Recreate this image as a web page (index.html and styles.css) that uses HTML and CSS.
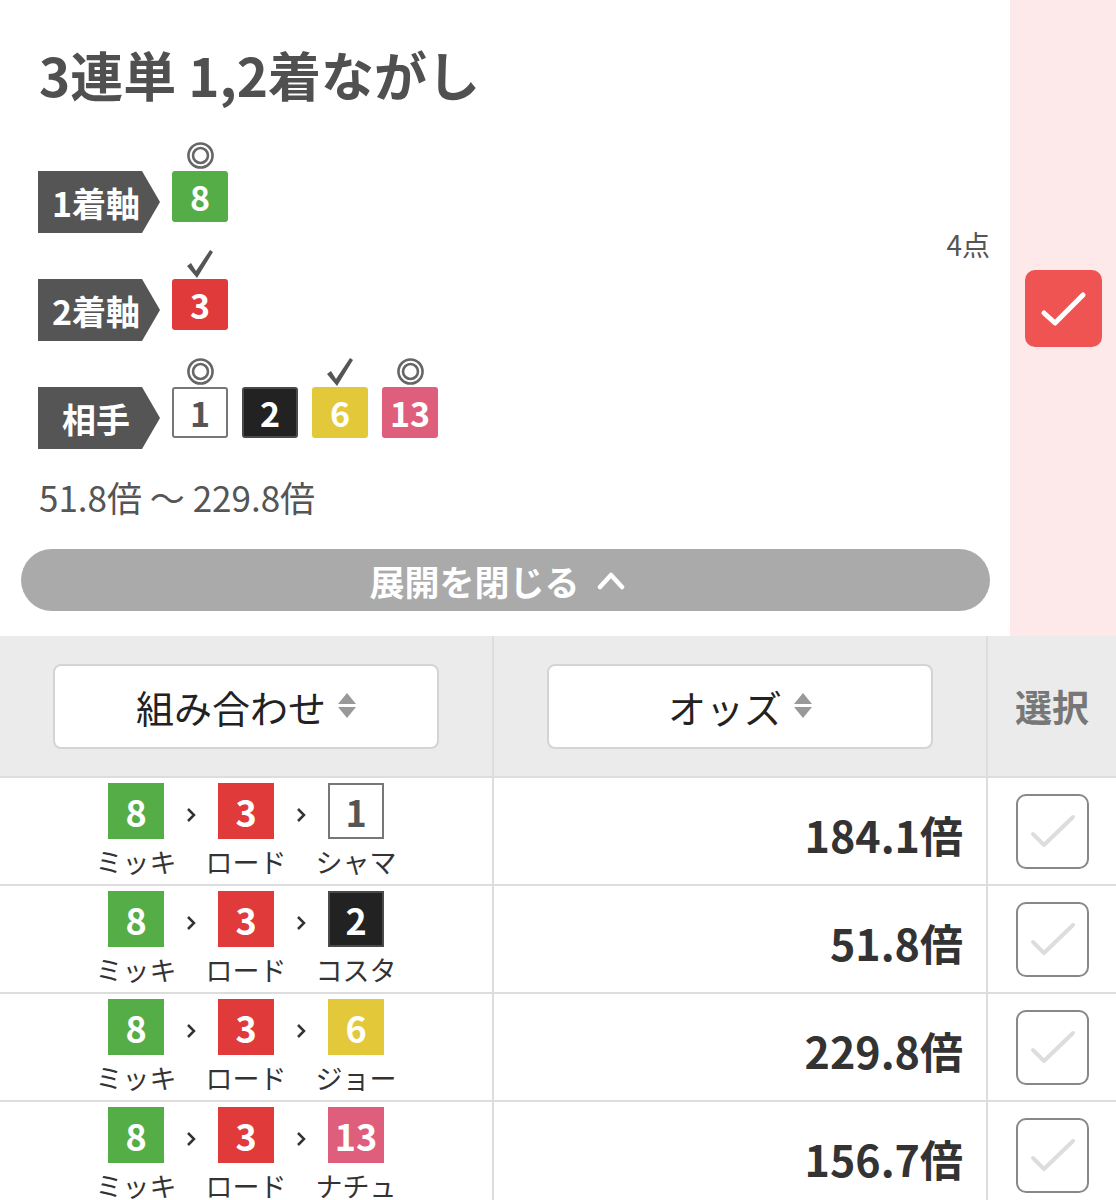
FILE: index.html
```html
<!DOCTYPE html>
<html lang="ja">
<head>
<meta charset="utf-8">
<title>3連単 1,2着ながし</title>
<link rel="stylesheet" href="styles.css">
</head>
<body>
<div class="top">
  <div class="main">
    <h1 class="title">3連単 1,2着ながし</h1>
    <div class="picks">
      <div class="pick-rows">
        <div class="pick-row">
          <div class="pick-label">1着軸</div>
          <div class="horses">
            <div class="horse">
              <span class="mark"><svg class="dbl" width="27" height="27" viewBox="0 0 26 26"><circle cx="13" cy="13" r="11.6" fill="none" stroke="#666" stroke-width="2.5"/><circle cx="13" cy="13" r="7.2" fill="none" stroke="#666" stroke-width="2.5"/></svg></span>
              <span class="num c-green">8</span>
            </div>
          </div>
        </div>
        <div class="pick-row">
          <div class="pick-label">2着軸</div>
          <div class="horses">
            <div class="horse">
              <span class="mark"><svg width="28" height="30" viewBox="0 0 28 30"><polygon points="1,17 5,14 10,22 24,1 27,3 11,29" fill="#555"/></svg></span>
              <span class="num c-red">3</span>
            </div>
          </div>
        </div>
        <div class="pick-row">
          <div class="pick-label">相手</div>
          <div class="horses">
            <div class="horse">
              <span class="mark"><svg class="dbl" width="27" height="27" viewBox="0 0 26 26"><circle cx="13" cy="13" r="11.6" fill="none" stroke="#666" stroke-width="2.5"/><circle cx="13" cy="13" r="7.2" fill="none" stroke="#666" stroke-width="2.5"/></svg></span>
              <span class="num c-white">1</span>
            </div>
            <div class="horse">
              <span class="mark"></span>
              <span class="num c-black">2</span>
            </div>
            <div class="horse">
              <span class="mark"><svg width="28" height="30" viewBox="0 0 28 30"><polygon points="1,17 5,14 10,22 24,1 27,3 11,29" fill="#555"/></svg></span>
              <span class="num c-yellow">6</span>
            </div>
            <div class="horse">
              <span class="mark"><svg class="dbl" width="27" height="27" viewBox="0 0 26 26"><circle cx="13" cy="13" r="11.6" fill="none" stroke="#666" stroke-width="2.5"/><circle cx="13" cy="13" r="7.2" fill="none" stroke="#666" stroke-width="2.5"/></svg></span>
              <span class="num c-pink">13</span>
            </div>
          </div>
        </div>
      </div>
      <div class="count">4点</div>
    </div>
    <p class="range">51.8倍 〜 229.8倍</p>
    <button class="collapse">展開を閉じる<svg width="30" height="20" viewBox="0 0 30 20"><path d="M4 17 L15 5 L26 17" fill="none" stroke="#fff" stroke-width="4.5" stroke-linecap="round" stroke-linejoin="round"/></svg></button>
  </div>
  <div class="side">
    <button class="check-on"><svg width="77" height="77" viewBox="0 0 77 77"><path d="M19 43 L30 53 L58 25" fill="none" stroke="#fff" stroke-width="5" stroke-linecap="round" stroke-linejoin="round"/></svg></button>
  </div>
</div>

<div class="grid">
  <div class="cell head"><button class="sort">組み合わせ<svg width="18" height="26" viewBox="0 0 18 26"><path d="M9 0 L18 11 L0 11 Z M0 14 L18 14 L9 25 Z" fill="#999"/></svg></button></div>
  <div class="cell head col-b"><button class="sort">オッズ<svg width="18" height="26" viewBox="0 0 18 26"><path d="M9 0 L18 11 L0 11 Z M0 14 L18 14 L9 25 Z" fill="#999"/></svg></button></div>
  <div class="cell head col-b sel-head">選択</div>

  <div class="cell combo">
    <div class="runner"><span class="sq c-green">8</span><span class="name">ミッキ</span></div>
    <span class="arrow"><svg width="10" height="16" viewBox="0 0 10 16"><path d="M2 2 L8 8 L2 14" fill="none" stroke="#333" stroke-width="2.5"/></svg></span>
    <div class="runner"><span class="sq c-red">3</span><span class="name">ロード</span></div>
    <span class="arrow"><svg width="10" height="16" viewBox="0 0 10 16"><path d="M2 2 L8 8 L2 14" fill="none" stroke="#333" stroke-width="2.5"/></svg></span>
    <div class="runner"><span class="sq c-white">1</span><span class="name">シャマ</span></div>
  </div>
  <div class="cell odds col-b">184.1倍</div>
  <div class="cell sel col-b"><span class="cb"><svg width="69" height="71" viewBox="0 0 69 71"><path d="M15 38 L26 49 L55 21" fill="none" stroke="#ddd" stroke-width="4" stroke-linecap="round" stroke-linejoin="round"/></svg></span></div>

  <div class="cell combo">
    <div class="runner"><span class="sq c-green">8</span><span class="name">ミッキ</span></div>
    <span class="arrow"><svg width="10" height="16" viewBox="0 0 10 16"><path d="M2 2 L8 8 L2 14" fill="none" stroke="#333" stroke-width="2.5"/></svg></span>
    <div class="runner"><span class="sq c-red">3</span><span class="name">ロード</span></div>
    <span class="arrow"><svg width="10" height="16" viewBox="0 0 10 16"><path d="M2 2 L8 8 L2 14" fill="none" stroke="#333" stroke-width="2.5"/></svg></span>
    <div class="runner"><span class="sq c-black">2</span><span class="name">コスタ</span></div>
  </div>
  <div class="cell odds col-b">51.8倍</div>
  <div class="cell sel col-b"><span class="cb"><svg width="69" height="71" viewBox="0 0 69 71"><path d="M15 38 L26 49 L55 21" fill="none" stroke="#ddd" stroke-width="4" stroke-linecap="round" stroke-linejoin="round"/></svg></span></div>

  <div class="cell combo">
    <div class="runner"><span class="sq c-green">8</span><span class="name">ミッキ</span></div>
    <span class="arrow"><svg width="10" height="16" viewBox="0 0 10 16"><path d="M2 2 L8 8 L2 14" fill="none" stroke="#333" stroke-width="2.5"/></svg></span>
    <div class="runner"><span class="sq c-red">3</span><span class="name">ロード</span></div>
    <span class="arrow"><svg width="10" height="16" viewBox="0 0 10 16"><path d="M2 2 L8 8 L2 14" fill="none" stroke="#333" stroke-width="2.5"/></svg></span>
    <div class="runner"><span class="sq c-yellow">6</span><span class="name">ジョー</span></div>
  </div>
  <div class="cell odds col-b">229.8倍</div>
  <div class="cell sel col-b"><span class="cb"><svg width="69" height="71" viewBox="0 0 69 71"><path d="M15 38 L26 49 L55 21" fill="none" stroke="#ddd" stroke-width="4" stroke-linecap="round" stroke-linejoin="round"/></svg></span></div>

  <div class="cell combo">
    <div class="runner"><span class="sq c-green">8</span><span class="name">ミッキ</span></div>
    <span class="arrow"><svg width="10" height="16" viewBox="0 0 10 16"><path d="M2 2 L8 8 L2 14" fill="none" stroke="#333" stroke-width="2.5"/></svg></span>
    <div class="runner"><span class="sq c-red">3</span><span class="name">ロード</span></div>
    <span class="arrow"><svg width="10" height="16" viewBox="0 0 10 16"><path d="M2 2 L8 8 L2 14" fill="none" stroke="#333" stroke-width="2.5"/></svg></span>
    <div class="runner"><span class="sq c-pink">13</span><span class="name">ナチュ</span></div>
  </div>
  <div class="cell odds col-b">156.7倍</div>
  <div class="cell sel col-b"><span class="cb"><svg width="69" height="71" viewBox="0 0 69 71"><path d="M15 38 L26 49 L55 21" fill="none" stroke="#ddd" stroke-width="4" stroke-linecap="round" stroke-linejoin="round"/></svg></span></div>
</div>
</body>
</html>
```

FILE: styles.css
```css
* { box-sizing: border-box; }
body {
  margin: 0;
  width: 1116px;
  font-family: "Noto Sans CJK JP", "Noto Sans", sans-serif;
  color: #555;
  background: #fff;
}
svg { display: block; }

/* top summary */
.top { display: flex; height: 636px; }
.main { flex: 0 0 1010px; padding: 43px 20px 0 38px; }
.title {
  margin: 0 0 0 1px;
  font-size: 53px;
  line-height: 62px;
  font-weight: 700;
  color: #505050;
}
.picks { display: flex; margin-top: 66px; }
.pick-rows { flex: 1; display: flex; flex-direction: column; gap: 46px; }
.pick-row { display: flex; align-items: flex-start; gap: 12px; }
.pick-label {
  width: 122px;
  height: 62px;
  background: #555;
  color: #fff;
  clip-path: polygon(0 0, calc(100% - 18px) 0, 100% 50%, calc(100% - 18px) 100%, 0 100%);
  display: flex;
  align-items: center;
  justify-content: center;
  padding-right: 6px;
  font-size: 34px;
  font-weight: 700;
}
.horses { display: flex; gap: 14px; margin-top: -30px; }
.horse { display: flex; flex-direction: column; align-items: center; }
.mark { height: 30px; display: flex; align-items: flex-end; justify-content: center; }
.mark .dbl { margin-bottom: 2px; }
.num {
  width: 56px;
  height: 51px;
  border-radius: 3px;
  display: flex;
  align-items: center;
  justify-content: center;
  font-size: 34px;
  font-weight: 700;
  color: #fff;
}
.count { font-size: 28px; line-height: 40px; margin-top: 53px; color: #555; }
.range { margin: 24px 0 0 1px; font-size: 35px; line-height: 48px; color: #555; }
.collapse {
  display: flex;
  align-items: center;
  justify-content: center;
  gap: 16px;
  margin: 28px 0 0 -17px;
  padding: 0 16px 0 0;
  width: 969px;
  height: 62px;
  border: none;
  border-radius: 31px;
  background: #aaa;
  color: #fff;
  font-family: inherit;
  font-size: 35px;
  font-weight: 700;
}
.side {
  flex: 1;
  background: #fde8ea;
  display: flex;
  align-items: center;
  justify-content: center;
  padding-bottom: 20px;
}
.check-on {
  width: 77px;
  height: 77px;
  padding: 0;
  border: none;
  border-radius: 10px;
  background: #ef5352;
}

/* table */
.grid { display: grid; grid-template-columns: 492px 494px 130px; }
.cell { border-bottom: 2px solid #ddd; }
.col-b { border-left: 2px solid #ddd; }
.head {
  height: 142px;
  background: #ebebeb;
  display: flex;
  align-items: center;
  justify-content: center;
}
.sort {
  width: 386px;
  height: 85px;
  background: #fff;
  border: 2px solid #d4d4d4;
  border-radius: 8px;
  display: flex;
  align-items: center;
  justify-content: center;
  gap: 12px;
  font-family: inherit;
  font-size: 38px;
  color: #222;
}
.sel-head { font-size: 37px; font-weight: 700; color: #777; }

.combo {
  height: 108px;
  display: flex;
  justify-content: center;
  align-items: flex-start;
  padding-top: 5px;
}
.runner { width: 80px; display: flex; flex-direction: column; align-items: center; }
.sq {
  width: 56px;
  height: 56px;
  display: flex;
  align-items: center;
  justify-content: center;
  font-size: 36px;
  font-weight: 700;
  color: #fff;
}
.name { margin-top: 6px; font-size: 27px; line-height: 34px; color: #333; white-space: nowrap; }
.arrow { width: 30px; height: 56px; display: flex; align-items: center; justify-content: center; padding-top: 8px; }
.odds {
  height: 108px;
  display: flex;
  align-items: center;
  justify-content: flex-end;
  padding: 6px 23px 0 0;
  font-size: 43px;
  font-weight: 700;
  color: #333;
}
.sel { height: 108px; display: flex; align-items: center; justify-content: center; }
.cb {
  width: 73px;
  height: 75px;
  border: 2px solid #888;
  border-radius: 10px;
  background: #fff;
}

/* horse colours (after sizes so text colour wins) */
.c-green { background: #55ad48; }
.c-red { background: #e03a3a; }
.c-yellow { background: #e3c93a; }
.c-pink { background: #df5e7b; }
.c-black { background: #222; border: 2px solid #4a4a4a; }
.c-white { background: #fff; border: 2px solid #777; color: #555; }
```
